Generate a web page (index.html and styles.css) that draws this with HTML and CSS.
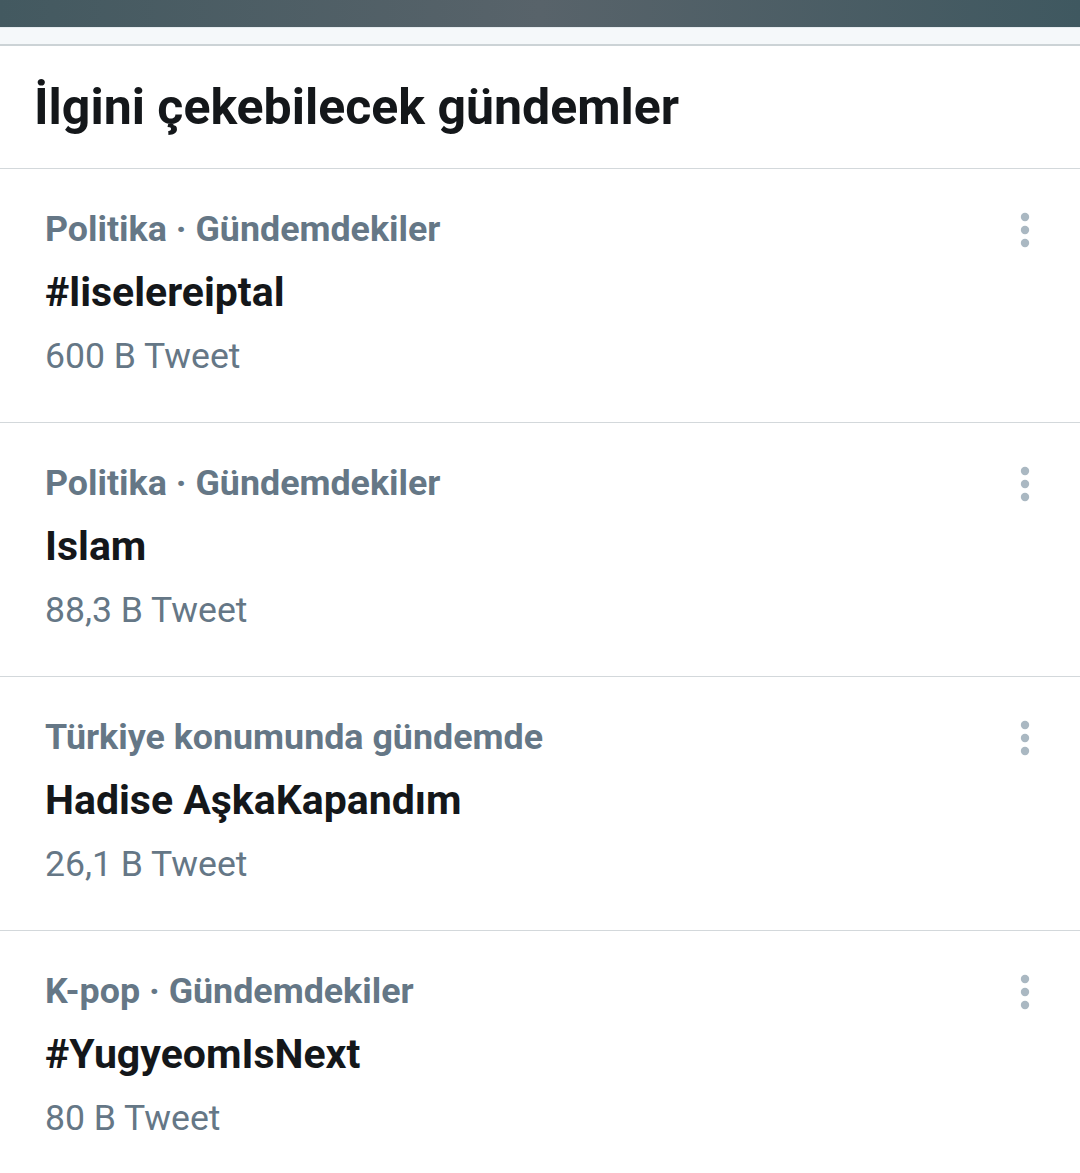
FILE: index.html
```html
<!DOCTYPE html>
<html lang="tr">
<head>
<meta charset="utf-8">
<link rel="stylesheet" href="styles.css">
</head>
<body>
<div class="statusbar"></div>
<div class="subbar"></div>
<main class="panel">
  <h1 class="panel-title">İlgini çekebilecek gündemler</h1>
  <section class="trend">
    <div class="trend-text">
      <div class="trend-cat">Politika · Gündemdekiler</div>
      <div class="trend-name">#liselereiptal</div>
      <div class="trend-count">600 B Tweet</div>
    </div>
    <svg class="trend-more" viewBox="0 0 10 36" width="10" height="36"><circle cx="5" cy="5" r="4.2"/><circle cx="5" cy="18" r="4.2"/><circle cx="5" cy="31" r="4.2"/></svg>
  </section>
  <section class="trend">
    <div class="trend-text">
      <div class="trend-cat">Politika · Gündemdekiler</div>
      <div class="trend-name">Islam</div>
      <div class="trend-count">88,3 B Tweet</div>
    </div>
    <svg class="trend-more" viewBox="0 0 10 36" width="10" height="36"><circle cx="5" cy="5" r="4.2"/><circle cx="5" cy="18" r="4.2"/><circle cx="5" cy="31" r="4.2"/></svg>
  </section>
  <section class="trend">
    <div class="trend-text">
      <div class="trend-cat">Türkiye konumunda gündemde</div>
      <div class="trend-name">Hadise AşkaKapandım</div>
      <div class="trend-count">26,1 B Tweet</div>
    </div>
    <svg class="trend-more" viewBox="0 0 10 36" width="10" height="36"><circle cx="5" cy="5" r="4.2"/><circle cx="5" cy="18" r="4.2"/><circle cx="5" cy="31" r="4.2"/></svg>
  </section>
  <section class="trend">
    <div class="trend-text">
      <div class="trend-cat">K-pop · Gündemdekiler</div>
      <div class="trend-name">#YugyeomIsNext</div>
      <div class="trend-count">80 B Tweet</div>
    </div>
    <svg class="trend-more" viewBox="0 0 10 36" width="10" height="36"><circle cx="5" cy="5" r="4.2"/><circle cx="5" cy="18" r="4.2"/><circle cx="5" cy="31" r="4.2"/></svg>
  </section>
</main>
</body>
</html>
```
FILE: styles.css
```css
* { box-sizing: border-box; }
html, body { margin: 0; padding: 0; background: #fff; }
body { font-family: Roboto, "Liberation Sans", sans-serif; width: 1080px; overflow: hidden; }

.statusbar {
  height: 27px;
  background: linear-gradient(90deg, #435960 0%, #58636a 50%, #3f5860 100%);
}
.subbar {
  height: 19px;
  background: #f5f8fa;
  border-top: 1px solid #e6ecf0;
  border-bottom: 2px solid #ccd3d6;
}

.panel-title {
  margin: 0;
  height: 123px;
  padding-left: 34px;
  display: flex;
  align-items: center;
  font-size: 50px;
  font-weight: 700;
  color: #14171a;
  border-bottom: 1px solid #d3d8db;
}

.trend {
  display: flex;
  justify-content: space-between;
  align-items: flex-start;
  height: 254px;
  padding: 28px 50px 0 45px;
  border-bottom: 1px solid #d3d8db;
}
.trend-cat {
  font-size: 35.8px;
  line-height: 64px;
  font-weight: 700;
  color: #657786;
}
.trend-name {
  font-size: 41px;
  line-height: 63px;
  font-weight: 700;
  color: #14171a;
}
.trend-count {
  font-size: 35.6px;
  line-height: 64px;
  color: #657786;
}
.trend-more {
  margin-top: 15px;
  fill: #aab8c2;
}
```
